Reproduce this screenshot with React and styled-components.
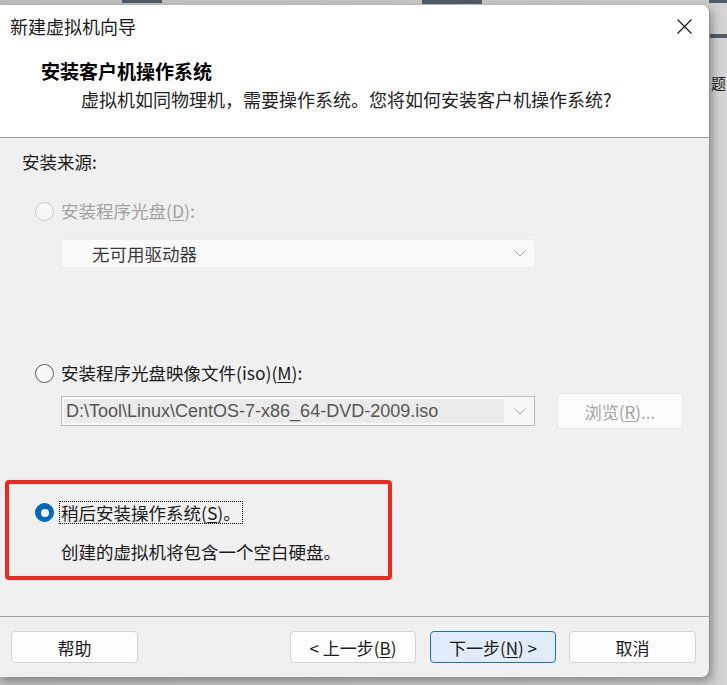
import React from "react";
import styled, { createGlobalStyle } from "styled-components";

const GlobalStyle = createGlobalStyle`
  html, body {
    margin: 0;
    padding: 0;
    background: #c8c8c8;
  }
  body {
    font-family: "Noto Sans CJK SC", "Noto Sans", sans-serif;
  }
`;

const Desktop = styled.div`
  position: relative;
  width: 727px;
  height: 685px;
  box-sizing: border-box;
  padding-top: 5px;
  overflow: hidden;
  background: linear-gradient(90deg, #bdbdbd 0%, #c9c9c9 97%, #d6d6d6 100%);
`;

// bits of the window behind the dialog
const BehindBar = styled.span`
  position: absolute;
  display: block;
  background: #4f5b66;
`;

const BehindGlyph = styled.span`
  position: absolute;
  left: 711px;
  top: 73px;
  font-size: 15px;
  line-height: 20px;
  color: #1e1e1e;
`;

const Dialog = styled.div`
  position: relative;
  z-index: 1;
  width: 710px;
  height: 672px;
  box-sizing: border-box;
  display: flex;
  flex-direction: column;
  background: #f0f0f0;
  border-right: 1px solid #8e8e8e;
  border-radius: 0 8px 8px 0;
  box-shadow: 2px 4px 8px rgba(0, 0, 0, 0.3);
  overflow: hidden;
`;

const TitleBar = styled.div`
  height: 42px;
  flex: none;
  display: flex;
  align-items: center;
  justify-content: space-between;
  padding: 0 17px 0 10px;
  background: #fff;
  font-size: 18px;
  color: #1a1a1a;
`;

const Header = styled.div`
  flex: none;
  box-sizing: border-box;
  height: 91px;
  padding: 12px 0 0 41px;
  background: #fff;
  border-bottom: 1px solid #a0a0a0;
`;

const HeaderTitle = styled.div`
  font-size: 19px;
  font-weight: 700;
  line-height: 24px;
  color: #000;
`;

const HeaderText = styled.div`
  margin: 4px 0 0 40px;
  font-size: 18px;
  line-height: 24px;
  color: #222;
`;

const Body = styled.div`
  flex: 1;
  display: flex;
  flex-direction: column;
  align-items: flex-start;
  padding: 12px 22px 0;
  font-size: 17.5px;
  color: #1a1a1a;
`;

const Line = styled.div`
  line-height: 24px;
  margin-top: ${(p) => p.$top || 0}px;
  margin-left: ${(p) => p.$left || 0}px;
`;

const OptionRow = styled.label`
  display: flex;
  align-items: center;
  gap: 7px;
  line-height: 24px;
  margin-top: ${(p) => p.$top || 0}px;
  margin-left: ${(p) => p.$left || 0}px;
  color: ${(p) => (p.$disabled ? "#a2a2a2" : "#1a1a1a")};
`;

const Radio = styled.span`
  width: 19px;
  height: 19px;
  box-sizing: border-box;
  border-radius: 50%;
  flex: none;
  ${(p) =>
    p.$state === "on"
      ? `background: #0067c0; border: 1px solid #0067c0; display:flex; align-items:center; justify-content:center;
         &::after { content: ""; width: 8px; height: 8px; border-radius: 50%; background: #fff; }`
      : p.$state === "disabled"
      ? `background: #f8f8f8; border: 1px solid #c9c9c9;`
      : `background: #f7f7f7; border: 1px solid #5c5c5c;`}
`;

const Mn = styled.span`
  text-decoration: underline;
  text-underline-offset: 2px;
`;

const Focus = styled.span`
  border: 1px dotted #000;
  padding: 0 1px;
  margin-left: -2px;
  line-height: 21px;
`;

const Select = styled.div`
  width: 474px;
  height: 29px;
  box-sizing: border-box;
  margin: ${(p) => p.$top || 0}px 0 0 39px;
  display: flex;
  align-items: center;
  justify-content: space-between;
  padding: 0 8px 0 30px;
  background: #fafafa;
  border: 1px solid #ececec;
  border-radius: 2px;
  color: #3a3a3a;
`;

const Chevron = () => (
  <svg width="12" height="7" viewBox="0 0 12 7">
    <polyline points="0.5,0.5 6,6 11.5,0.5" fill="none" stroke="#a8a8a8" strokeWidth="1" />
  </svg>
);

const ComboRow = styled.div`
  display: flex;
  align-items: center;
  margin: 8px 0 0 39px;
`;

const Combo = styled.div`
  width: 474px;
  height: 30px;
  box-sizing: border-box;
  display: flex;
  align-items: center;
  padding: 2px 8px 2px 2px;
  background: #f8f8f8;
  border: 1px solid #bcbcbc;
  gap: 10px;
`;

const ComboField = styled.div`
  flex: 1;
  height: 100%;
  display: flex;
  align-items: center;
  padding-left: 2px;
  background: #ebebeb;
  font-family: "Liberation Sans", Arial, sans-serif;
  font-size: 18px;
  color: #555;
`;

const Button = styled.button`
  width: ${(p) => p.$w || 127}px;
  height: ${(p) => p.$h || 32}px;
  box-sizing: border-box;
  flex: none;
  margin-left: ${(p) => p.$left || 0}px;
  border-radius: 4px;
  font-family: "Noto Sans CJK SC", "Noto Sans", sans-serif;
  font-size: 17px;
  padding: 0;
  border: 1px solid ${(p) => (p.$primary ? "#1a6fc0" : p.disabled ? "#e6e6e6" : "#d3d3d3")};
  background: ${(p) => (p.$primary ? "#e0edf9" : p.disabled ? "#fbfbfb" : "#fdfdfd")};
  color: ${(p) => (p.disabled ? "#a3a3a3" : "#1a1a1a")};
`;

const RedBox = styled.div`
  width: 387px;
  height: 100px;
  box-sizing: border-box;
  margin: 51px 0 0 -17px;
  padding: 17px 0 0 26px;
  border: 4px solid #f5281d;
  border-radius: 4px;
`;

const Footer = styled.div`
  height: 61px;
  flex: none;
  box-sizing: border-box;
  display: flex;
  padding: 14px 13px 0 11px;
  border-top: 1px solid #a0a0a0;
`;

const Spacer = styled.div`
  flex: 1;
`;

const CloseIcon = () => (
  <svg width="15" height="15" viewBox="0 0 15 15">
    <path d="M0.5 0.5 L14.5 14.5 M14.5 0.5 L0.5 14.5" stroke="#1a1a1a" strokeWidth="1.2" />
  </svg>
);

export default function App() {
  return (
    <>
      <GlobalStyle />
      <Desktop>
        <BehindBar style={{ left: 122, top: 0, width: 40, height: 3 }} />
        <BehindBar style={{ left: 422, top: 0, width: 60, height: 4 }} />
        <BehindBar style={{ left: 709, top: 0, width: 18, height: 3 }} />
        <BehindBar style={{ left: 709, top: 34, width: 18, height: 4 }} />
        <BehindGlyph>题</BehindGlyph>
        <Dialog>
          <TitleBar>
            <span>新建虚拟机向导</span>
            <CloseIcon />
          </TitleBar>
          <Header>
            <HeaderTitle>安装客户机操作系统</HeaderTitle>
            <HeaderText>虚拟机如同物理机，需要操作系统。您将如何安装客户机操作系统?</HeaderText>
          </Header>
          <Body>
            <Line>安装来源:</Line>
            <OptionRow $top={25} $left={13} $disabled>
              <Radio $state="disabled" />
              <span>
                安装程序光盘(<Mn>D</Mn>):
              </span>
            </OptionRow>
            <Select $top={16}>
              <span>无可用驱动器</span>
              <Chevron />
            </Select>
            <OptionRow $top={93} $left={13}>
              <Radio $state="off" />
              <span>
                安装程序光盘映像文件(iso)(<Mn>M</Mn>):
              </span>
            </OptionRow>
            <ComboRow>
              <Combo>
                <ComboField>D:\Tool\Linux\CentOS-7-x86_64-DVD-2009.iso</ComboField>
                <Chevron />
              </Combo>
              <Button disabled $w={126} $h={36} $left={22}>
                浏览(<Mn>R</Mn>)...
              </Button>
            </ComboRow>
            <RedBox>
              <OptionRow>
                <Radio $state="on" />
                <Focus>
                  稍后安装操作系统(<Mn>S</Mn>)。
                </Focus>
              </OptionRow>
              <Line $top={16} $left={26}>创建的虚拟机将包含一个空白硬盘。</Line>
            </RedBox>
          </Body>
          <Footer>
            <Button>帮助</Button>
            <Spacer />
            <Button $w={126}>
              &lt; 上一步(<Mn>B</Mn>)
            </Button>
            <Button $w={126} $left={14} $primary>
              下一步(<Mn>N</Mn>) &gt;
            </Button>
            <Button $left={13}>取消</Button>
          </Footer>
        </Dialog>
      </Desktop>
    </>
  );
}
